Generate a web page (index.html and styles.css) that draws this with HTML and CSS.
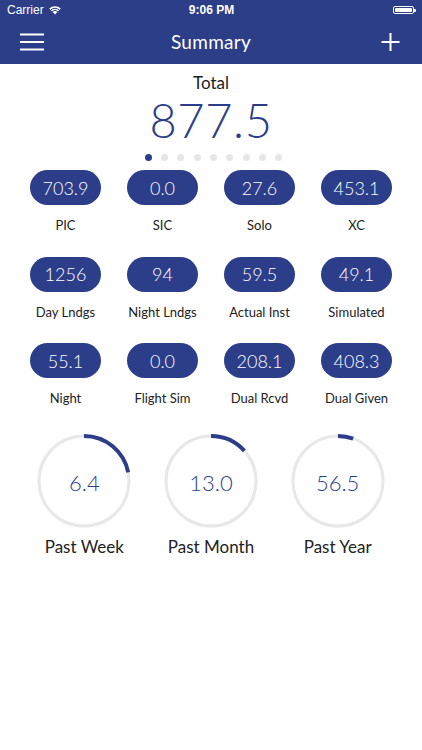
FILE: index.html
```html
<!DOCTYPE html>
<html>
<head>
<meta charset="utf-8">
<link rel="stylesheet" href="styles.css">
</head>
<body>
<header class="topbar">
  <div class="status">
    <div class="status-left">
      <span>Carrier</span>
      <svg class="wifi" width="12" height="9" viewBox="0 0 12 9">
        <path d="M6 8.6 L0.2 2.6 A8.4 8.4 0 0 1 11.8 2.6 Z" fill="#fff"/>
        <path d="M1.6 4.1 A6.3 6.3 0 0 1 10.4 4.1" stroke="#2c3e88" stroke-width="1" fill="none"/>
        <path d="M3.1 5.6 A4.2 4.2 0 0 1 8.9 5.6" stroke="#2c3e88" stroke-width="1" fill="none"/>
      </svg>
    </div>
    <div class="status-time">9:06 PM</div>
    <div class="status-right">
      <div class="battery"><div class="battery-fill"></div></div>
      <div class="battery-tip"></div>
    </div>
  </div>
  <nav class="navbar">
    <svg class="nav-icon" width="24" height="18" viewBox="0 0 24 18">
      <path d="M0 1.5 H24 M0 9 H24 M0 16.5 H24" stroke="#fff" stroke-width="2"/>
    </svg>
    <div class="nav-title">Summary</div>
    <svg class="nav-icon" width="24" height="18" viewBox="0 0 24 18">
      <path d="M12.5 0 V18 M3.5 9 H21.5" stroke="#fff" stroke-width="2"/>
    </svg>
  </nav>
</header>

<main class="content">
  <div class="total-label">Total</div>
  <div class="total-value">877.5</div>
  <div class="dots">
    <span class="dot active"></span><span class="dot"></span><span class="dot"></span><span class="dot"></span><span class="dot"></span><span class="dot"></span><span class="dot"></span><span class="dot"></span><span class="dot"></span>
  </div>

  <div class="stats">
    <div class="stat"><div class="pill">703.9</div><div class="stat-label">PIC</div></div>
    <div class="stat"><div class="pill">0.0</div><div class="stat-label">SIC</div></div>
    <div class="stat"><div class="pill">27.6</div><div class="stat-label">Solo</div></div>
    <div class="stat"><div class="pill">453.1</div><div class="stat-label">XC</div></div>

    <div class="stat"><div class="pill">1256</div><div class="stat-label">Day Lndgs</div></div>
    <div class="stat"><div class="pill">94</div><div class="stat-label">Night Lndgs</div></div>
    <div class="stat"><div class="pill">59.5</div><div class="stat-label">Actual Inst</div></div>
    <div class="stat"><div class="pill">49.1</div><div class="stat-label">Simulated</div></div>

    <div class="stat"><div class="pill">55.1</div><div class="stat-label">Night</div></div>
    <div class="stat"><div class="pill">0.0</div><div class="stat-label">Flight Sim</div></div>
    <div class="stat"><div class="pill">208.1</div><div class="stat-label">Dual Rcvd</div></div>
    <div class="stat"><div class="pill">408.3</div><div class="stat-label">Dual Given</div></div>
  </div>

  <div class="rings">
    <div class="ring-item">
      <div class="ring">
        <svg width="96" height="96" viewBox="0 0 96 96">
          <circle cx="48" cy="48" r="45" class="ring-track"/>
          <circle cx="48" cy="48" r="45" class="ring-bar" stroke-dasharray="62 300" transform="rotate(-90 48 48)"/>
        </svg>
        <div class="ring-value">6.4</div>
      </div>
      <div class="ring-label">Past Week</div>
    </div>
    <div class="ring-item">
      <div class="ring">
        <svg width="96" height="96" viewBox="0 0 96 96">
          <circle cx="48" cy="48" r="45" class="ring-track"/>
          <circle cx="48" cy="48" r="45" class="ring-bar" stroke-dasharray="37.5 300" transform="rotate(-90 48 48)"/>
        </svg>
        <div class="ring-value">13.0</div>
      </div>
      <div class="ring-label">Past Month</div>
    </div>
    <div class="ring-item">
      <div class="ring">
        <svg width="96" height="96" viewBox="0 0 96 96">
          <circle cx="48" cy="48" r="45" class="ring-track"/>
          <circle cx="48" cy="48" r="45" class="ring-bar" stroke-dasharray="15.5 300" transform="rotate(-90 48 48)"/>
        </svg>
        <div class="ring-value">56.5</div>
      </div>
      <div class="ring-label">Past Year</div>
    </div>
  </div>
</main>
</body>
</html>
```

FILE: styles.css
```css
html, body {
  margin: 0;
  padding: 0;
  background: #fff;
}
body {
  width: 422px;
  font-family: Lato, "Noto Sans", "DejaVu Sans", sans-serif;
  color: #222;
}

.topbar {
  background: #2c3e88;
  color: #fff;
}
.status {
  height: 20px;
  display: flex;
  align-items: center;
  justify-content: space-between;
  padding: 0 6px 0 7px;
  font-family: "Liberation Sans", Arial, sans-serif;
  font-size: 12px;
}
.status-left {
  display: flex;
  align-items: center;
  gap: 5px;
  width: 100px;
}
.wifi { display: block; }
.status-time {
  font-weight: bold;
  font-size: 12px;
}
.status-right {
  width: 100px;
  display: flex;
  justify-content: flex-end;
  align-items: center;
}
.battery {
  width: 21px;
  height: 8px;
  border: 1px solid #fff;
  border-radius: 2px;
  padding: 1px;
  box-sizing: border-box;
  display: flex;
}
.battery-fill {
  flex: 1;
  background: #fff;
  border-radius: 1px;
}
.battery-tip {
  width: 1.5px;
  height: 3px;
  background: #fff;
  border-radius: 0 1px 1px 0;
}

.navbar {
  height: 44px;
  display: flex;
  align-items: center;
  justify-content: space-between;
  padding: 0 20px 0 20px;
}
.nav-icon { display: block; }
.nav-title {
  font-size: 19px;
  font-weight: 400;
  letter-spacing: 0.3px;
  padding-bottom: 1px;
}

.content {
  display: flex;
  flex-direction: column;
  align-items: center;
}
.total-label {
  margin-top: 11px;
  font-size: 17px;
  line-height: 16px;
  color: #222;
}
.total-value {
  margin-top: 5px;
  font-size: 47px;
  line-height: 48px;
  font-weight: 300;
  color: #2c3e8a;
  letter-spacing: 0.6px;
}
.dots {
  margin-top: 9.5px;
  display: flex;
  gap: 9.3px;
  margin-left: 5px;
}
.dot {
  width: 7px;
  height: 7px;
  border-radius: 50%;
  background: #e6e6e6;
}
.dot.active { background: #2c3e8a; }

.stats {
  margin-top: 9.5px;
  width: 388px;
  display: grid;
  grid-template-columns: repeat(4, 1fr);
  row-gap: 23.5px;
}
.stat {
  display: flex;
  flex-direction: column;
  align-items: center;
}
.pill {
  width: 71px;
  height: 35px;
  border-radius: 18px;
  background: #2c3e8a;
  color: #fff;
  font-size: 18px;
  font-weight: 300;
  display: flex;
  align-items: center;
  justify-content: center;
}
.stat-label {
  margin-top: 12px;
  font-size: 13px;
  line-height: 16px;
  color: #222;
}

.rings {
  margin-top: 26.5px;
  width: 380px;
  display: grid;
  grid-template-columns: repeat(3, 1fr);
}
.ring-item {
  display: flex;
  flex-direction: column;
  align-items: center;
}
.ring {
  width: 96px;
  height: 96px;
  display: grid;
}
.ring svg,
.ring-value {
  grid-area: 1 / 1;
}
.ring-track {
  fill: none;
  stroke: #e8e8e8;
  stroke-width: 3;
}
.ring-bar {
  fill: none;
  stroke: #2c3e8a;
  stroke-width: 4;
}
.ring-value {
  align-self: center;
  justify-self: center;
  font-size: 22px;
  font-weight: 300;
  color: #2c3e8a;
  padding-top: 3px;
}
.ring-label {
  margin-top: 8.5px;
  font-size: 17px;
  line-height: 20px;
  color: #222;
}
```
